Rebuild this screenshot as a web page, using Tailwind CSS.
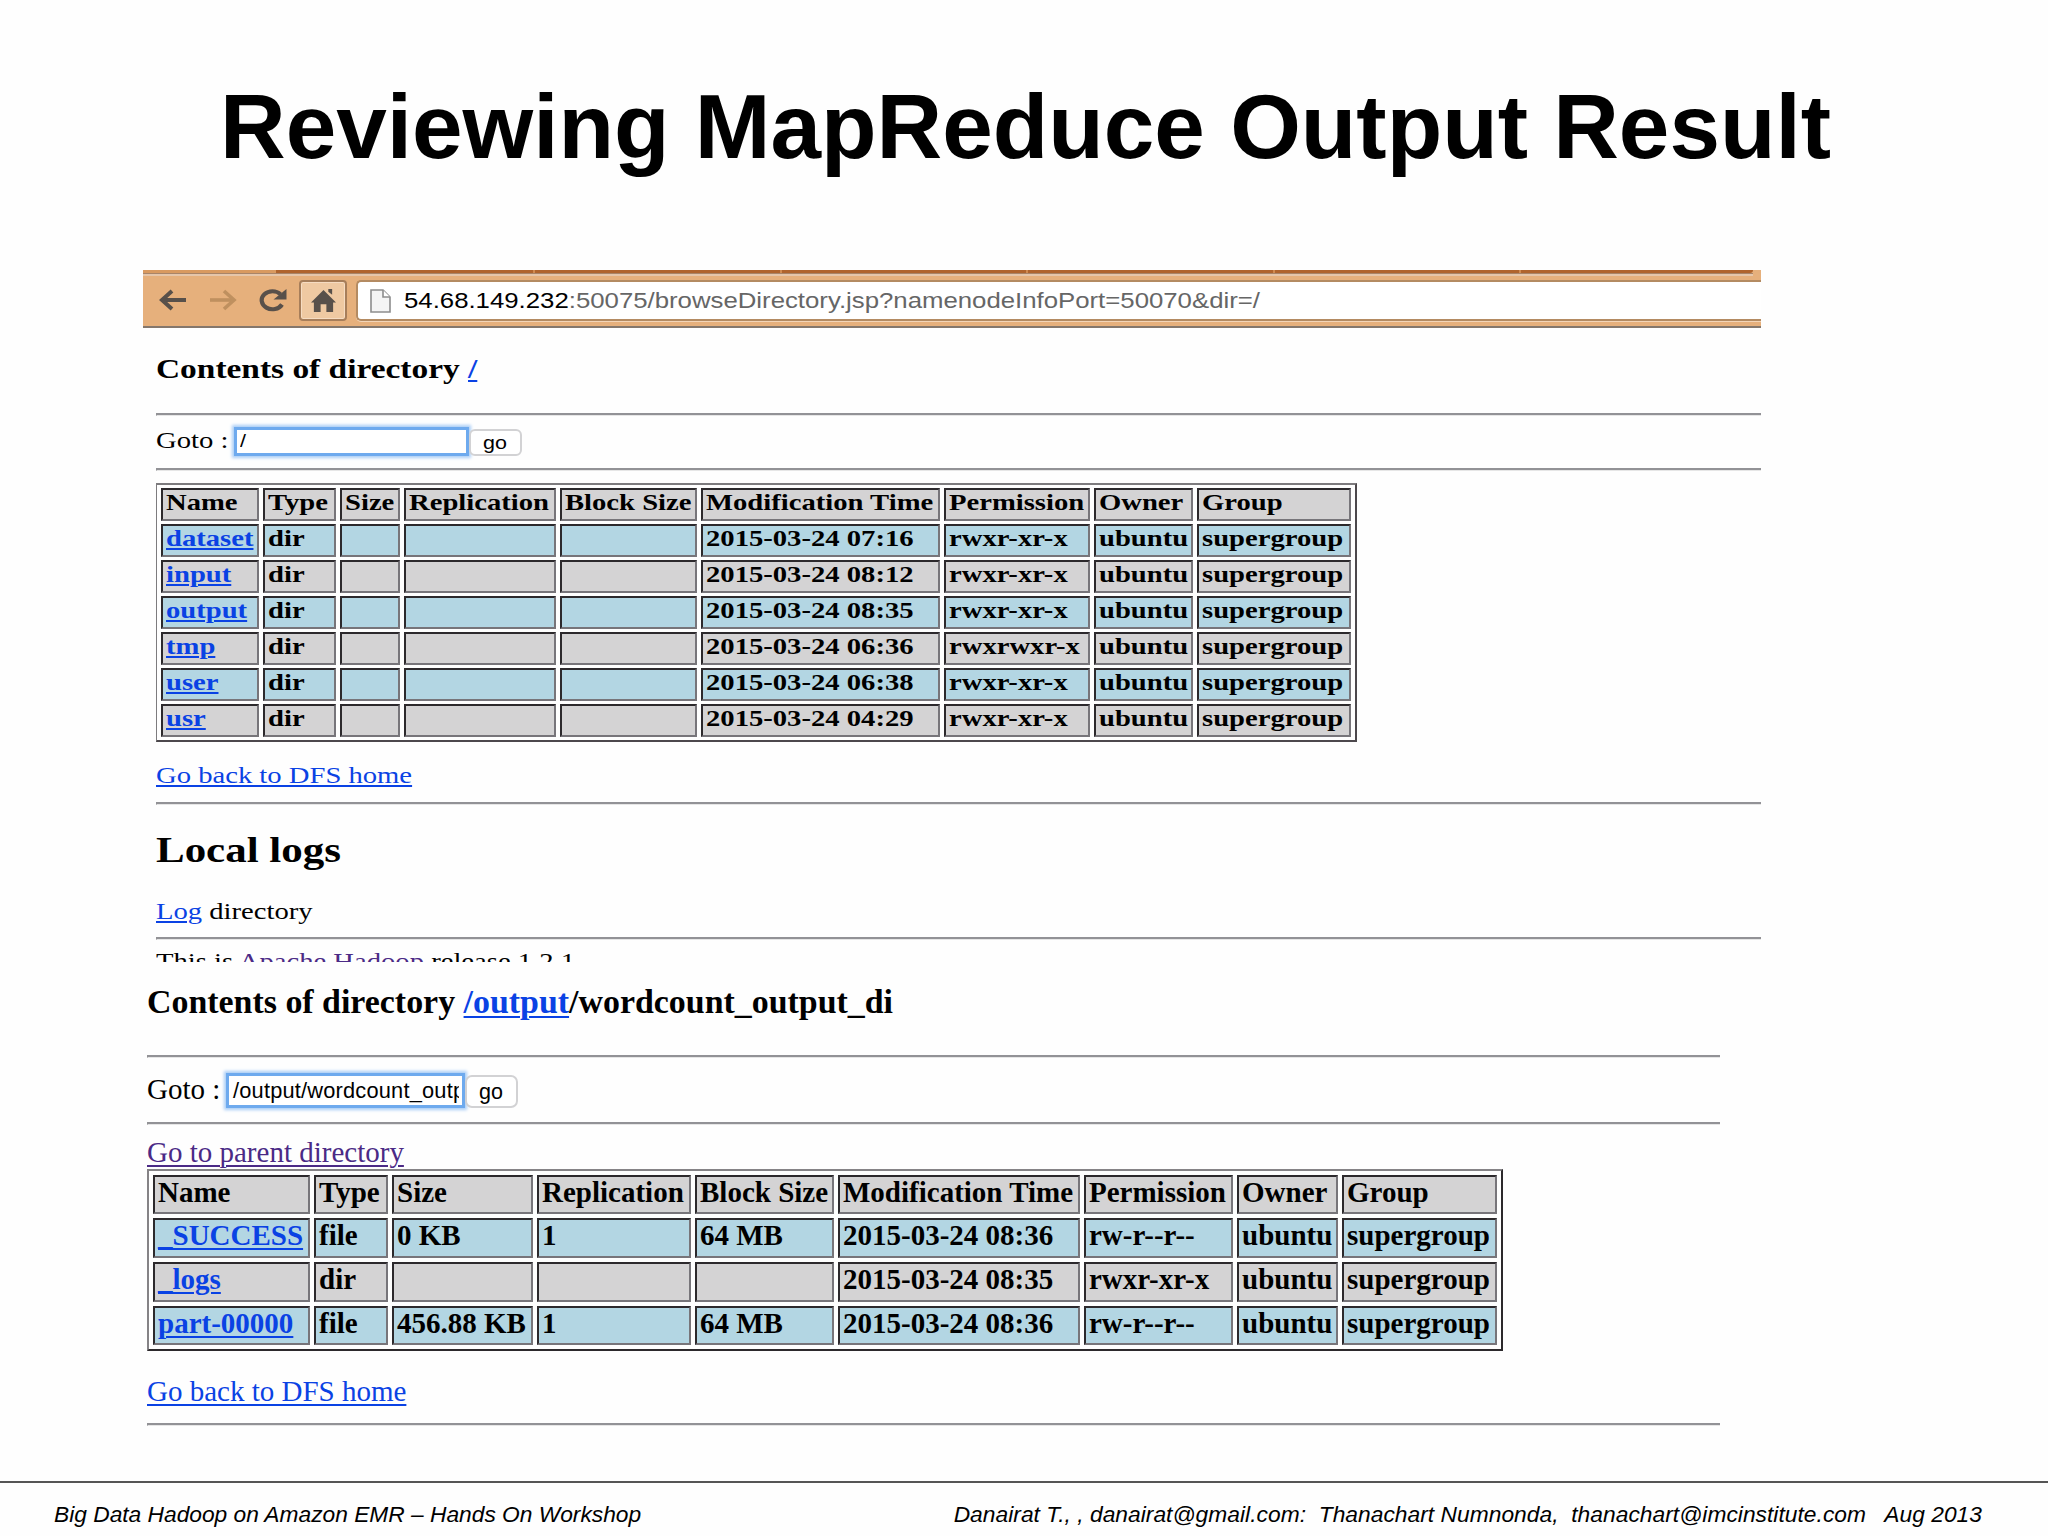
<!DOCTYPE html>
<html lang="en">

<head>
    <meta charset="UTF-8" />
    <meta name="viewport" content="width=device-width, initial-scale=1" />
    <title>Reviewing MapReduce Output Result</title>
    <script src="https://cdn.jsdelivr.net/npm/@tailwindcss/browser@4"></script>
</head>

<body class="bg-white">

<div class="flex h-[1536px] w-[2048px] flex-col overflow-hidden bg-[#fefefe] text-black">

    <!-- Slide title -->
    <h1 class="h-[270px] pt-[75px] pl-[3px] text-center font-['Liberation_Sans',sans-serif] text-[90.9px] leading-[104px] font-bold whitespace-nowrap">Reviewing MapReduce Output Result</h1>

    <!-- Root directory listing -->
    <section class="ml-[143px] h-[692px] w-[1618px] shrink-0 overflow-hidden font-['Liberation_Serif',serif] text-[24px] leading-[28px] whitespace-nowrap [&_span]:inline-block [&_span]:origin-left [&_span]:scale-x-[1.193] [&_a]:text-[#0a42e4] [&_a]:underline [&_a]:decoration-2 [&_a]:underline-offset-2">

        <!-- Browser toolbar -->
        <div class="flex h-[58px] flex-col border-b-2 border-[#84776c] bg-[#e6b07c]">
            <div class="flex h-[3px] pr-2">
                <div class="w-[133px] bg-[#d99a60]"></div>
                <div class="w-[259px] border-r-2 border-[#d08a50] bg-[#b0642d]"></div>
                <div class="w-[247px] border-r-2 border-[#d08a50] bg-[#b0642d]"></div>
                <div class="w-[246px] border-r-2 border-[#d08a50] bg-[#b0642d]"></div>
                <div class="w-[247px] border-r-2 border-[#d08a50] bg-[#b0642d]"></div>
                <div class="w-[246px] border-r-2 border-[#d08a50] bg-[#b0642d]"></div>
                <div class="flex-1 rounded-br bg-[#b0642d]"></div>
            </div>
            <div class="mr-2 h-[1px] bg-[#a98568]"></div>
            <div class="mr-2 h-[2px] bg-[#e6c6aa]"></div>
            <div class="flex flex-1 items-start pt-1">
                <svg class="mt-[9px] ml-[16px] h-[22px] w-[28px]" viewBox="0 0 28 22" fill="none" stroke="#58504a" stroke-width="4">
                    <path d="M27 11H4" />
                    <path d="M13 2L3 11l10 9" />
                </svg>
                <svg class="mt-[9px] ml-[22px] h-[22px] w-[28px]" viewBox="0 0 28 22" fill="none" stroke="#bf905f" stroke-width="3.6">
                    <path d="M1 11h23" />
                    <path d="M15 2l10 9-10 9" />
                </svg>
                <svg class="mt-[8px] ml-[21px] h-[24px] w-[30px]" viewBox="0 0 30 24">
                    <path d="M24 16.500A10.800 9 0 1 1 22.500 6.200" fill="none" stroke="#58504a" stroke-width="4.200" />
                    <path d="M28.500 1v10.500H15.500z" fill="#58504a" />
                </svg>
                <div class="ml-[11px] flex h-[41px] w-[48px] items-center justify-center rounded-[4px] border-2 border-[#a77e5a] bg-[#efc9a2] shadow-[inset_0_0_0_1px_#f6dcc2]">
                    <svg class="h-[25px] w-[25px]" viewBox="0 0 26 26" fill="#58504a">
                        <path d="M13 2L0 15h3v10h7v-8h6v8h7V15h3z" />
                        <path d="M18 1h4v6l-4-3z" />
                    </svg>
                </div>
                <div class="ml-[9px] flex h-[41px] flex-1 items-center rounded-l-[5px] border-2 border-r-0 border-[#b48b62] bg-white shadow-[0_1px_0_#f3d5b8]">
                    <svg class="ml-[12px] h-[24px] w-[21px]" viewBox="0 0 21 24" fill="#f4f4f4" stroke="#8d8d8d" stroke-width="1.600">
                        <path d="M1 1h12l7 7v15H1z" />
                        <path d="M13 1v7h7" fill="#fff" />
                    </svg>
                    <span class="ml-[13px] pt-px font-['Liberation_Sans',sans-serif] text-[21.6px] text-[#666]"><b class="font-normal text-black">54.68.149.232</b>:50075/browseDirectory.jsp?namenodeInfoPort=50070&amp;dir=/</span>
                </div>
            </div>
        </div>

        <div class="pl-[13px]">
            <h3 class="mt-[25px] text-[28px] leading-[32px] font-bold"><span>Contents of directory <a>/</a></span></h3>
            <div class="mt-[28px] h-[3px] border-t-2 border-b border-l border-t-[#929296] border-b-[#e6e6e6] border-l-[#929296]"></div>

            <div class="mt-[9px] flex h-[31px] leading-[31px]">
                <div class="w-[78px]"><span>Goto :</span></div>
                <div class="mt-[2px] flex h-[29px] w-[235px] items-center border-3 border-[#6eaaee] bg-white pl-[3px] font-['Liberation_Sans',sans-serif] text-[18px] shadow-[0_0_3px_2px_#a9cdf6]"><span>/</span></div>
                <div class="mt-[4px] flex h-[27px] w-[53px] items-center justify-center rounded-[6px] border-2 border-[#d2d2d4] bg-white pt-px pr-[5px] font-['Liberation_Sans',sans-serif] text-[18px]"><span>go</span></div>
            </div>
            <div class="mt-[12px] h-[3px] border-t-2 border-b border-l border-t-[#929296] border-b-[#e6e6e6] border-l-[#929296]"></div>

            <table class="mt-[12px] w-[1201px] table-fixed border-separate border-spacing-x-[4px] border-spacing-y-[3px] border-2 border-l border-[#7d7b7e] border-r-[#4c484c] border-b-[#4c484c] text-left font-bold [&_td]:h-[33px] [&_td]:border-2 [&_td]:border-r-[#77757a] [&_td]:border-b-[#77757a] [&_td]:border-t-[#2c292c] [&_td]:border-l-[#2c292c] [&_td]:p-0 [&_td]:pl-[3px] [&_td]:align-top [&_td]:leading-[25px] [&_tr]:bg-[#d4d3d4] [&_tr:nth-child(even)]:bg-[#b3d6e3]">
                <colgroup>
                    <col class="w-[98px]"><col class="w-[73px]"><col class="w-[60px]"><col class="w-[152px]"><col class="w-[137px]"><col class="w-[239px]"><col class="w-[146px]"><col class="w-[99px]"><col class="w-[154px]">
                </colgroup>
                <tbody>
                <tr><td><span>Name</span></td><td><span>Type</span></td><td><span>Size</span></td><td><span>Replication</span></td><td><span>Block Size</span></td><td><span>Modification Time</span></td><td><span>Permission</span></td><td><span>Owner</span></td><td><span>Group</span></td></tr>
                <tr><td><span><a>dataset</a></span></td><td><span>dir</span></td><td></td><td></td><td></td><td><span>2015-03-24 07:16</span></td><td><span>rwxr-xr-x</span></td><td><span>ubuntu</span></td><td><span>supergroup</span></td></tr>
                <tr><td><span><a>input</a></span></td><td><span>dir</span></td><td></td><td></td><td></td><td><span>2015-03-24 08:12</span></td><td><span>rwxr-xr-x</span></td><td><span>ubuntu</span></td><td><span>supergroup</span></td></tr>
                <tr><td><span><a>output</a></span></td><td><span>dir</span></td><td></td><td></td><td></td><td><span>2015-03-24 08:35</span></td><td><span>rwxr-xr-x</span></td><td><span>ubuntu</span></td><td><span>supergroup</span></td></tr>
                <tr><td><span><a>tmp</a></span></td><td><span>dir</span></td><td></td><td></td><td></td><td><span>2015-03-24 06:36</span></td><td><span>rwxrwxr-x</span></td><td><span>ubuntu</span></td><td><span>supergroup</span></td></tr>
                <tr><td><span><a>user</a></span></td><td><span>dir</span></td><td></td><td></td><td></td><td><span>2015-03-24 06:38</span></td><td><span>rwxr-xr-x</span></td><td><span>ubuntu</span></td><td><span>supergroup</span></td></tr>
                <tr><td><span><a>usr</a></span></td><td><span>dir</span></td><td></td><td></td><td></td><td><span>2015-03-24 04:29</span></td><td><span>rwxr-xr-x</span></td><td><span>ubuntu</span></td><td><span>supergroup</span></td></tr>
                </tbody>
            </table>

            <p class="mt-[19px] h-[28px]"><span><a>Go back to DFS home</a></span></p>
            <div class="mt-[13px] h-[3px] border-t-2 border-b border-l border-t-[#929296] border-b-[#e6e6e6] border-l-[#929296]"></div>
            <h2 class="mt-[25px] h-[40px] text-[36px] leading-[40px] font-bold"><span>Local logs</span></h2>
            <p class="mt-[27px] h-[28px]"><span><a>Log</a> directory</span></p>
            <div class="mt-[12px] h-[3px] border-t-2 border-b border-l border-t-[#929296] border-b-[#e6e6e6] border-l-[#929296]"></div>
            <p class="mt-[7px] h-[28px]"><span>This is <b class="font-normal text-[#4b2a86]">Apache Hadoop</b> release 1.2.1</span></p>
        </div>
    </section>

    <!-- Word count output listing -->
    <section class="ml-[147px] w-[1573px] font-['Liberation_Serif',serif] text-[29px] leading-[34px] whitespace-nowrap [&_a]:text-[#0a42e4] [&_a]:underline [&_a]:decoration-2 [&_a]:underline-offset-3">
        <h3 class="mt-[20px] text-[33.9px] leading-[40px] font-bold">Contents of directory <a>/output</a>/wordcount_output_di</h3>
        <div class="mt-[33px] h-[3px] border-t-2 border-b border-l border-t-[#929296] border-b-[#e6e6e6] border-l-[#929296]"></div>

        <div class="mt-[12px] flex h-[40px] leading-[38px]">
            <div class="w-[79px]">Goto :</div>
            <div class="mt-[3px] flex h-[35px] w-[239px] items-center border-3 border-[#6eaaee] bg-white px-[3px] font-['Liberation_Sans',sans-serif] text-[21.8px] tracking-[0.2px] shadow-[0_0_3px_2px_#a9cdf6]"><div class="w-[227px] overflow-hidden pl-[1px]">/output/wordcount_outp</div></div>
            <div class="mt-[5px] flex h-[33px] w-[53px] items-center justify-center rounded-[7px] border-2 border-[#d2d2d4] bg-white pr-px font-['Liberation_Sans',sans-serif] text-[21.5px]">go</div>
        </div>
        <div class="mt-[12px] h-[3px] border-t-2 border-b border-l border-t-[#929296] border-b-[#e6e6e6] border-l-[#929296]"></div>

        <p class="mt-[10px] text-[#4b2a86] underline decoration-2 underline-offset-3">Go to parent directory</p>

        <table class="w-[1356px] table-fixed border-separate border-spacing-[4px] border-2 border-[#858386] border-r-[#2c292c] border-b-[#2c292c] text-left font-bold [&_td]:border-2 [&_td]:border-r-[#77757a] [&_td]:border-b-[#77757a] [&_td]:border-t-[#2c292c] [&_td]:border-l-[#2c292c] [&_td]:p-0 [&_td]:pl-[3px] [&_td]:align-top [&_td]:leading-[30px] [&_tr]:bg-[#d4d3d4] [&_tr:nth-child(even)]:bg-[#b3d6e3]">
            <colgroup>
                <col class="w-[157px]"><col class="w-[74px]"><col class="w-[141px]"><col class="w-[154px]"><col class="w-[139px]"><col class="w-[242px]"><col class="w-[149px]"><col class="w-[101px]"><col class="w-[155px]">
            </colgroup>
            <tbody>
            <tr class="h-[39px]"><td>Name</td><td>Type</td><td>Size</td><td>Replication</td><td>Block Size</td><td>Modification Time</td><td>Permission</td><td>Owner</td><td>Group</td></tr>
            <tr class="h-[40px]"><td><a>_SUCCESS</a></td><td>file</td><td>0 KB</td><td>1</td><td>64 MB</td><td>2015-03-24 08:36</td><td>rw-r--r--</td><td>ubuntu</td><td>supergroup</td></tr>
            <tr class="h-[40px]"><td><a>_logs</a></td><td>dir</td><td></td><td></td><td></td><td>2015-03-24 08:35</td><td>rwxr-xr-x</td><td>ubuntu</td><td>supergroup</td></tr>
            <tr class="h-[39px]"><td><a>part-00000</a></td><td>file</td><td>456.88 KB</td><td>1</td><td>64 MB</td><td>2015-03-24 08:36</td><td>rw-r--r--</td><td>ubuntu</td><td>supergroup</td></tr>
            </tbody>
        </table>

        <p class="mt-[23px]"><a>Go back to DFS home</a></p>
        <div class="mt-[15px] h-[3px] border-t-2 border-b border-l border-t-[#929296] border-b-[#e6e6e6] border-l-[#929296]"></div>
    </section>

    <!-- Slide footer -->
    <footer class="mt-auto flex h-[55px] shrink-0 justify-between border-t-2 border-[#555] pt-[16px] pr-[66px] pl-[54px] font-['Liberation_Sans',sans-serif] text-[22.75px] leading-[30px] whitespace-pre italic"><p>Big Data Hadoop on Amazon EMR – Hands On Workshop</p><p class="tracking-[0.04px]">Danairat T., , danairat@gmail.com:  Thanachart Numnonda,  thanachart@imcinstitute.com   Aug 2013</p></footer>
</div>

</body>

</html>
